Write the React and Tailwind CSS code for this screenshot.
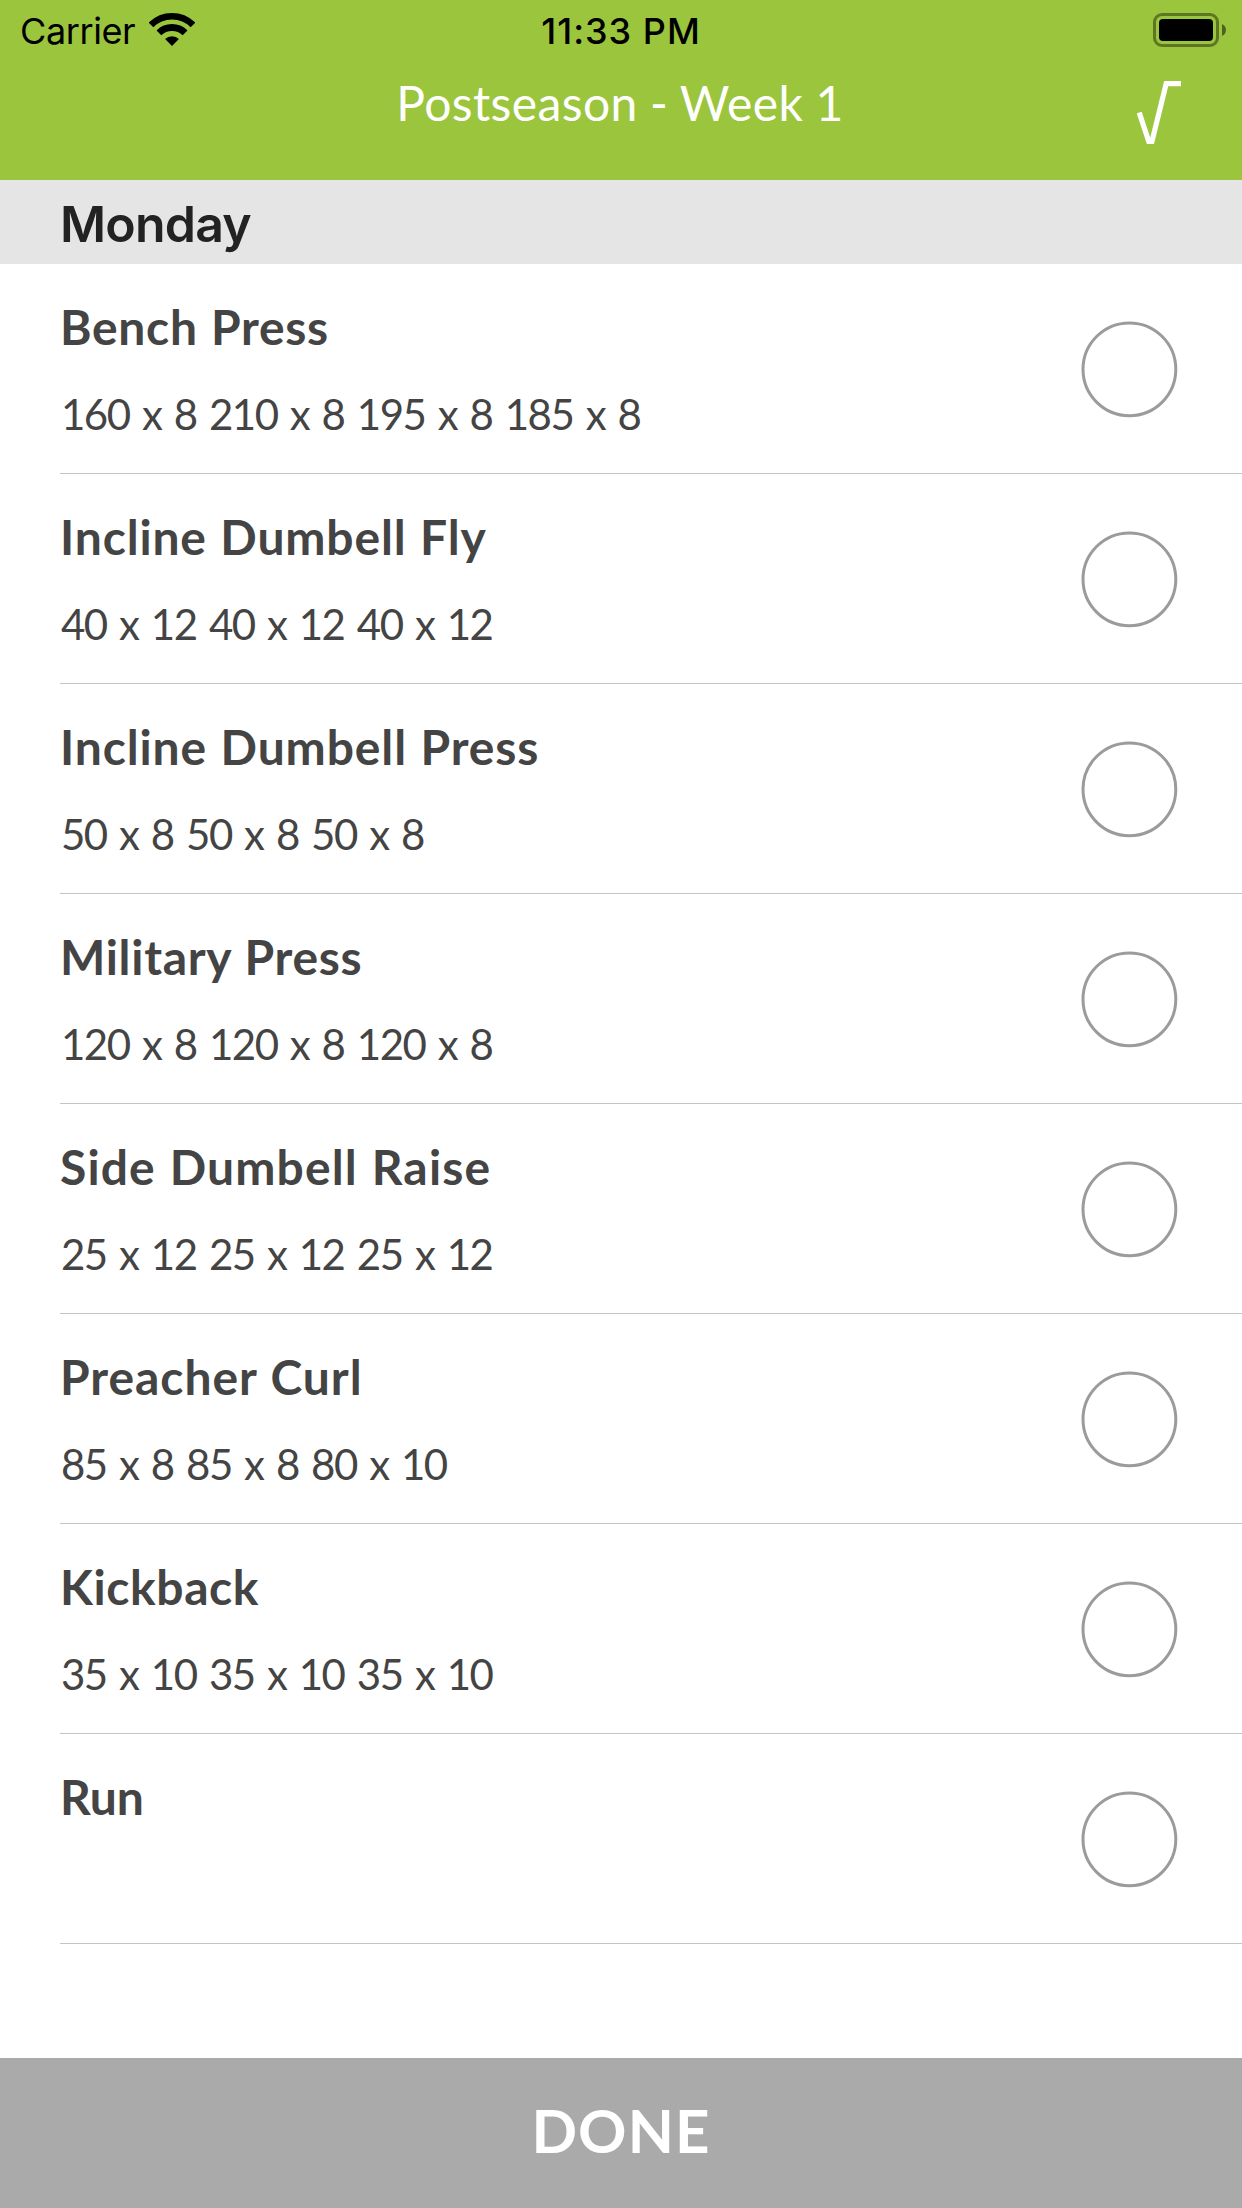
import React from "react";

const exercises = [
  { name: "Bench Press", sets: "160 x 8 210 x 8 195 x 8 185 x 8", tracking: "tracking-[0.7px]" },
  { name: "Incline Dumbell Fly", sets: "40 x 12 40 x 12 40 x 12", tracking: "tracking-[0.85px]" },
  { name: "Incline Dumbell Press", sets: "50 x 8 50 x 8 50 x 8", tracking: "tracking-[0.88px]" },
  { name: "Military Press", sets: "120 x 8 120 x 8 120 x 8", tracking: "tracking-[0.7px]" },
  { name: "Side Dumbell Raise", sets: "25 x 12 25 x 12 25 x 12", tracking: "tracking-[1.15px]" },
  { name: "Preacher Curl", sets: "85 x 8 85 x 8 80 x 10", tracking: "tracking-[0.95px]" },
  { name: "Kickback", sets: "35 x 10 35 x 10 35 x 10", tracking: "tracking-[0.6px]" },
  { name: "Run", sets: "", tracking: "tracking-[-0.1px]" },
];

function WifiIcon() {
  return (
    <svg className="mt-[13px] h-[34px] w-[46px]" viewBox="0 0 46 34" fill="none" stroke="black">
      <path d="M2 12A29.7 29.7 0 0 1 44 12" strokeWidth="6.6" />
      <path d="M9.9 19.9A18.6 18.6 0 0 1 36.1 19.9" strokeWidth="6.8" />
      <path d="M23 33L16.1 26.1A9.8 9.8 0 0 1 29.9 26.1Z" fill="black" stroke="none" />
    </svg>
  );
}

function BatteryIcon() {
  return (
    <svg className="mt-[13px] mr-4 h-[34px] w-[73px]" viewBox="0 0 73 34" fill="none">
      <rect x="1.5" y="1.5" width="63" height="31" rx="7.5" stroke="black" strokeOpacity="0.4" strokeWidth="3" />
      <rect x="6" y="6" width="54" height="22" rx="4" fill="black" />
      <path d="M69 11C71.2 12 73 14.3 73 17S71.2 22 69 23Z" fill="black" fillOpacity="0.5" />
    </svg>
  );
}

function RootIcon() {
  return (
    <svg className="mt-[21px] mr-[61px] h-[63px] w-[44px]" viewBox="0 0 44 63" fill="none" stroke="white">
      <path d="M2.2 31.6L13.6 66L29.2 2.7H44" strokeWidth="5.2" />
    </svg>
  );
}

function StatusBar() {
  return (
    <div className="grid h-[60px] grid-cols-3 font-['Inter',sans-serif] text-[36px] leading-[44px] text-black">
      <div className="flex items-start pl-5">
        <span className="mt-[9px] mr-[14px] tracking-[-0.4px]">Carrier</span>
        <WifiIcon />
      </div>
      <div className="mt-[9px] text-center font-medium tracking-[1px]">11:33 PM</div>
      <div className="flex items-start justify-end">
        <BatteryIcon />
      </div>
    </div>
  );
}

function Exercise({ name, sets, tracking }) {
  return (
    <li className="ml-[60px] flex h-[210px] items-start justify-between border-b border-[#c4c4c4] text-[#444444]">
      <div className="pt-[34px]">
        <h3 className={`text-[48px] leading-[58px] font-bold [word-spacing:1px] ${tracking}`}>{name}</h3>
        <p className="mt-[33px] ml-px text-[42px] leading-[50px] tracking-[-1.5px] [word-spacing:3.1px]">{sets}</p>
      </div>
      <button aria-label={name} className="mt-[57px] mr-16">
        <svg className="block size-[97px]" viewBox="0 0 97 97" fill="none">
          <circle cx="48.4" cy="48.3" r="46.4" stroke="#9b9b9b" strokeWidth="3" />
        </svg>
      </button>
    </li>
  );
}

export default function App() {
  return (
    <div className="flex h-[2208px] w-[1242px] flex-col bg-white font-['Lato',sans-serif]">
      <header className="h-[180px] bg-[#9bc53d]">
        <StatusBar />
        <div className="grid grid-cols-[1fr_auto_1fr] items-start text-white">
          <h1 className="col-start-2 mt-[14px] -ml-[2px] text-[48px] leading-[58px] tracking-[0.4px] [word-spacing:-0.5px]">
            Postseason - Week 1
          </h1>
          <div className="flex justify-end">
            <RootIcon />
          </div>
        </div>
      </header>
      <h2 className="h-[84px] bg-[#e5e5e5] pt-[14px] pl-[60px] font-['Inter',sans-serif] text-[50px] leading-[60px] font-semibold tracking-[-0.8px] text-[#222222]">
        Monday
      </h2>
      <ul className="flex-1">
        {exercises.map((e) => (
          <Exercise key={e.name} {...e} />
        ))}
      </ul>
      <button className="flex h-[150px] justify-center bg-[#aaaaaa] pt-[36px] text-[60px] leading-[72px] font-bold tracking-[1.1px] text-white">
        DONE
      </button>
    </div>
  );
}
